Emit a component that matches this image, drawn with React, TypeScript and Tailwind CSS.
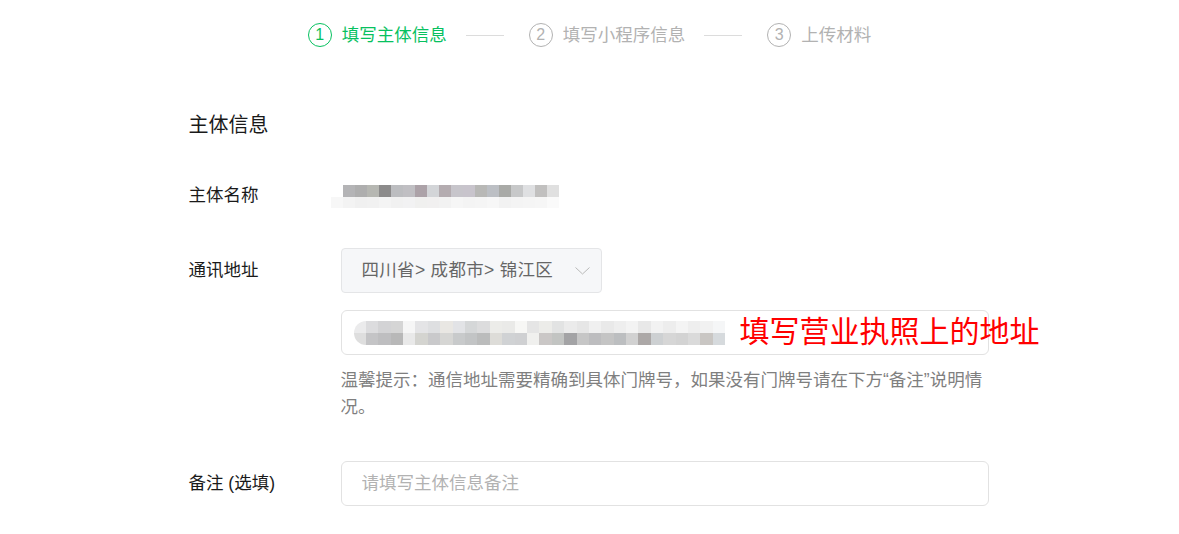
const NAME_TOP = ['#b4b4b6', '#aeaeae', '#b6b7b2', '#8c8b8b', '#bcbdc0', '#c0bfc3', '#aca2a8', '#d3d5d8', '#b4acb0', '#c7c5cb', '#c8c4cc', '#b8b8b6', '#bcbfc4', '#a9aaa7', '#c7c8c9', '#dfe0e2', '#c1c0bf', '#e0e0e0'];
const NAME_BOTTOM = ['#f7f7f7', '#f2f2f2', '#efefef', '#f0f0f0', '#f3f3f3', '#f0f0f0', '#f1f1f2', '#efefee', '#f0efef', '#f1f1f1', '#f6f6f6', '#f3f3f3', '#f4f4f4', '#f7f7f7', '#f1f1f1', '#f3f3f3', '#f4f4f4', '#f6f6f6', '#fafafa'];

const ADDR_TOP = ['#ebebec', '#dcdcde', '#d3d3d5', '#d5d5d5', '#f6f6f6', '#e4e4e6', '#dedfe1', '#e9e7e3', '#e2e3e6', '#d5d7d8', '#dcdcdd', '#ecece9', '#eaeae8', '#f7f7f5', '#e5e5e5', '#ecece9', '#e2e3e3', '#ebebeb', '#e6e6e6', '#f0f0f0', '#e9e9e9', '#eeeeee', '#f3f3f3', '#e8e8e8', '#f2f2f2', '#ededed', '#f4f4f4', '#eeeeee', '#f1f1f1', '#f5f6f7'];
const ADDR_BOTTOM = ['#dedede', '#c4c4c6', '#bebec0', '#b8b8b8', '#e9e9e9', '#d4d4d0', '#c9c9cb', '#d6d6d4', '#c8cacb', '#c2c4c5', '#bbbcbc', '#dddcd8', '#d0d2d4', '#cfd0d2', '#f0f0ee', '#cac7c6', '#c2c4c2', '#a3a3a5', '#c6c6c6', '#bdbdbf', '#c4c4c4', '#bcbec0', '#d1d1d1', '#aca8a7', '#cdd0d2', '#d6d6d6', '#d3d3d3', '#dadada', '#c9c6c3', '#d6dadd'];

const STEPS = ['填写主体信息', '填写小程序信息', '上传材料'];

const Mosaic = ({ cells, cell }: { cells: string[]; cell: string }) => (
  <div className="flex">
    {cells.map((c, i) => (
      <span key={i} className={`${cell} shrink-0`} style={{ backgroundColor: c }} />
    ))}
  </div>
);

export default function App() {
  return (
    <div className="w-full min-h-[534px] bg-white font-['Liberation_Sans','Noto_Sans_CJK_SC',sans-serif] text-[#353535]">
      {/* steps */}
      <div className="flex items-center justify-center pt-[23px] h-[47px]">
        {STEPS.map((s, i) => (
          <div key={i} className="flex items-center">
            {i > 0 && <span className="w-[38px] h-px bg-[#dcdcdc] ml-[19px] mr-[25px]" />}
            <span className={`w-[24px] h-[24px] rounded-full border flex items-center justify-center text-[16px] leading-none ${i === 0 ? 'border-[#07c160] text-[#07c160]' : 'border-[#b2b2b2] text-[#b2b2b2]'}`}>
              {i + 1}
            </span>
            <span className={`ml-[10px] text-[17.5px] leading-[24px] ${i === 0 ? 'text-[#07c160]' : 'text-[#b2b2b2]'}`}>{s}</span>
          </div>
        ))}
      </div>

      <div className="w-[802px] mx-auto">
        <h2 className="mt-[64px] text-[20px] leading-[28px] text-[#1a1a1a]">主体信息</h2>

        {/* name */}
        <div className="flex items-center mt-[44px] h-[24px]">
          <label className="w-[152px] text-[17.5px] text-[#1a1a1a]">主体名称</label>
          <div className="flex flex-col pt-[3px]">
            <div className="ml-[2px]">
              <Mosaic cells={NAME_TOP} cell="w-[12px] h-[12px]" />
            </div>
            <div className="-ml-[10px] opacity-90">
              <Mosaic cells={NAME_BOTTOM} cell="w-[12px] h-[11px]" />
            </div>
          </div>
        </div>

        {/* address */}
        <div className="flex items-start mt-[41px]">
          <label className="w-[152px] h-[45px] flex items-center text-[17.5px] text-[#1a1a1a]">通讯地址</label>
          <div className="w-[648px]">
            <div className="w-[261px] h-[45px] rounded-[4px] border border-[#e4e5e7] bg-[#f6f7f9] flex items-center pl-[20px] pr-[10px] text-[17.5px] text-[#666666]">
              <span className="flex-1 tracking-[0.3px]">四川省&gt; 成都市&gt; 锦江区</span>
              <svg width="15" height="8" viewBox="0 0 15 8" fill="none" className="mr-[1px]">
                <polyline points="0.5,0.5 7.5,7 14.5,0.5" stroke="#b9b9b9" strokeWidth="1" />
              </svg>
            </div>
            <div className="relative mt-[17px] h-[45px] rounded-[6px] border border-[#e2e2e2] flex items-center pl-[12px]">
              <div className="flex flex-col rounded-l-full overflow-hidden blur-[0.5px]">
                <Mosaic cells={ADDR_TOP} cell="w-[12.4px] h-[12px]" />
                <Mosaic cells={ADDR_BOTTOM} cell="w-[12.4px] h-[12px]" />
              </div>
              <span className="absolute left-[398px] top-[3px] text-[30px] leading-[36px] text-[#ff0000] whitespace-nowrap">填写营业执照上的地址</span>
            </div>
            <p className="mt-[12px] text-[17.5px] leading-[27px] text-[#7f7f7f]">
              温馨提示：通信地址需要精确到具体门牌号，如果没有门牌号请在下方“备注”说明情<br />况。
            </p>
          </div>
        </div>

        {/* remark */}
        <div className="flex items-center mt-[40px]">
          <label className="w-[152px] text-[17.5px] text-[#1a1a1a]">备注 (选填)</label>
          <input
            className="w-[648px] h-[45px] rounded-[6px] border border-[#e2e2e2] px-[20px] text-[17.5px] outline-none placeholder:text-[#b2b2b2]"
            placeholder="请填写主体信息备注"
          />
        </div>
      </div>
    </div>
  );
}
